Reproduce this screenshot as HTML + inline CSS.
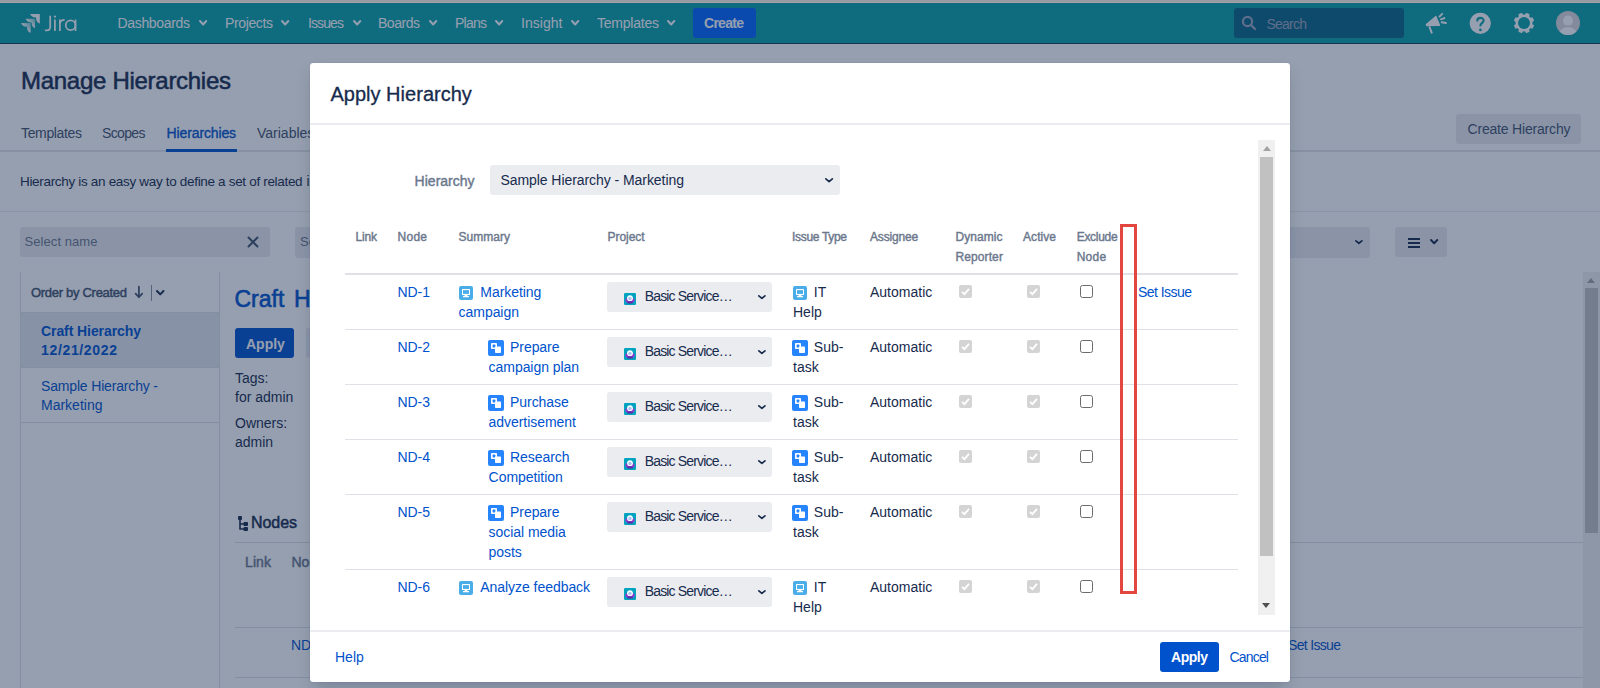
<!DOCTYPE html><html><head><meta charset="utf-8"><title>Apply Hierarchy</title><style>
html,body{margin:0;padding:0;}
body{width:1600px;height:688px;overflow:hidden;position:relative;background:#fff;font-family:"Liberation Sans",sans-serif;}
.t{position:absolute;white-space:nowrap;}
.r{position:absolute;}
#page{position:absolute;left:0;top:0;width:1600px;height:688px;overflow:hidden;}
#blanket{position:absolute;left:0;top:0;width:1600px;height:688px;background:rgba(23,43,77,0.45);z-index:2;}
#modal{position:absolute;left:310px;top:63px;width:980px;height:619px;background:#fff;border-radius:3px;overflow:hidden;z-index:3;box-shadow:0 0 1px rgba(9,30,66,0.31),0 8px 16px -4px rgba(9,30,66,0.25);}
</style></head><body><div id="page">
<div class="r" style="left:0px;top:0px;width:1600px;height:3px;background:#e8e4e8;"></div>
<div class="r" style="left:0px;top:3px;width:1600px;height:41px;background:#0aa0a6;"></div>
<div class="r" style="left:0px;top:43px;width:1600px;height:1px;background:#1b3a5a;"></div>
<svg class="r" style="left:16px;top:8px" width="30" height="30" viewBox="0 0 30 30">
<defs><linearGradient id="lg" x1="0" y1="1" x2="1" y2="0"><stop offset="0.45" stop-color="#fff"/><stop offset="1" stop-color="#fff" stop-opacity="0.4"/></linearGradient></defs>
<path d="M14.2 6.1 L23.8 6.1 L23.8 15.6 C21.5 14.8 20.1 13.5 20.1 9.6 C16.5 9.6 15.2 8.3 14.2 6.1 Z" fill="#fff"/>
<path d="M9.6 10.8 L19.1 10.8 L19.1 20.1 C16.9 19.3 15.6 18 15.6 14.5 C12 14.5 10.6 13.2 9.6 10.8 Z" fill="url(#lg)"/>
<path d="M5 15 L14.7 15 L14.7 24.8 C12.4 24 11.1 22.7 11.1 18.7 C7.5 18.7 6 17.4 5 15 Z" fill="url(#lg)"/>
</svg>
<svg class="r" style="left:40px;top:8px" width="40" height="26" viewBox="0 0 40 26" fill="none" stroke="#fff" stroke-width="1.75">
<path d="M10.2 7.8 L10.2 19 Q10.2 22.4 6.8 22.4 L4.9 22.4"/>
<circle cx="14.9" cy="8.7" r="1.1" fill="#fff" stroke="none"/>
<path d="M14.9 11.6 L14.9 23"/>
<path d="M19.9 11.6 L19.9 23 M19.9 15.8 Q20.3 11.9 24.6 11.9"/>
<circle cx="30.6" cy="17.3" r="4.85"/>
<path d="M35.5 11.6 L35.5 23"/>
</svg>
<div class="t " style="left:117.5px;top:13.15px;font-size:14px;line-height:20px;color:#fff;letter-spacing:-0.333px;">Dashboards</div>
<div class="t " style="left:225px;top:13.15px;font-size:14px;line-height:20px;color:#fff;letter-spacing:-0.368px;">Projects</div>
<div class="t " style="left:308px;top:13.15px;font-size:14px;line-height:20px;color:#fff;letter-spacing:-0.894px;">Issues</div>
<div class="t " style="left:378px;top:13.15px;font-size:14px;line-height:20px;color:#fff;letter-spacing:-0.472px;">Boards</div>
<div class="t " style="left:455px;top:13.15px;font-size:14px;line-height:20px;color:#fff;letter-spacing:-0.758px;">Plans</div>
<div class="t " style="left:521px;top:13.15px;font-size:14px;line-height:20px;color:#fff;letter-spacing:0.042px;">Insight</div>
<div class="t " style="left:597px;top:13.15px;font-size:14px;line-height:20px;color:#fff;letter-spacing:-0.227px;">Templates</div>
<svg class="r" style="left:198.75px;top:20.1px;overflow:visible" width="8.3" height="5.5" viewBox="0 0 8.3 5.5"><polyline points="1.0,1.0 4.15,4.5 7.300000000000001,1.0" fill="none" stroke="#fff" stroke-width="2" stroke-linecap="round" stroke-linejoin="round"/></svg>
<svg class="r" style="left:281.25px;top:20.1px;overflow:visible" width="8.3" height="5.5" viewBox="0 0 8.3 5.5"><polyline points="1.0,1.0 4.15,4.5 7.300000000000001,1.0" fill="none" stroke="#fff" stroke-width="2" stroke-linecap="round" stroke-linejoin="round"/></svg>
<svg class="r" style="left:352.5px;top:20.1px;overflow:visible" width="8.3" height="5.5" viewBox="0 0 8.3 5.5"><polyline points="1.0,1.0 4.15,4.5 7.300000000000001,1.0" fill="none" stroke="#fff" stroke-width="2" stroke-linecap="round" stroke-linejoin="round"/></svg>
<svg class="r" style="left:428.75px;top:20.1px;overflow:visible" width="8.3" height="5.5" viewBox="0 0 8.3 5.5"><polyline points="1.0,1.0 4.15,4.5 7.300000000000001,1.0" fill="none" stroke="#fff" stroke-width="2" stroke-linecap="round" stroke-linejoin="round"/></svg>
<svg class="r" style="left:495px;top:20.1px;overflow:visible" width="8.3" height="5.5" viewBox="0 0 8.3 5.5"><polyline points="1.0,1.0 4.15,4.5 7.300000000000001,1.0" fill="none" stroke="#fff" stroke-width="2" stroke-linecap="round" stroke-linejoin="round"/></svg>
<svg class="r" style="left:570.75px;top:20.1px;overflow:visible" width="8.3" height="5.5" viewBox="0 0 8.3 5.5"><polyline points="1.0,1.0 4.15,4.5 7.300000000000001,1.0" fill="none" stroke="#fff" stroke-width="2" stroke-linecap="round" stroke-linejoin="round"/></svg>
<svg class="r" style="left:666.75px;top:20.1px;overflow:visible" width="8.3" height="5.5" viewBox="0 0 8.3 5.5"><polyline points="1.0,1.0 4.15,4.5 7.300000000000001,1.0" fill="none" stroke="#fff" stroke-width="2" stroke-linecap="round" stroke-linejoin="round"/></svg>
<div class="r" style="left:693px;top:8px;width:63px;height:30px;background:#0065ff;border-radius:3px;"></div>
<div class="t " style="left:704px;top:13.15px;font-size:14px;line-height:20px;color:#fff;font-weight:bold;letter-spacing:-0.719px;">Create</div>
<div class="r" style="left:1234px;top:8px;width:170px;height:30px;background:#096483;border-radius:3px;"></div>
<svg class="r" style="left:1241px;top:15px" width="16" height="16" viewBox="0 0 16 16"><circle cx="6.5" cy="6.5" r="4.6" fill="none" stroke="#9aa5bd" stroke-width="2.2"/><line x1="10" y1="10" x2="14" y2="14" stroke="#9aa5bd" stroke-width="2.4" stroke-linecap="round"/></svg>
<div class="t " style="left:1266.5px;top:14.15px;font-size:14px;line-height:20px;color:#9aa5bd;letter-spacing:-0.772px;">Search</div>
<svg class="r" style="left:1420px;top:8px" width="32" height="30" viewBox="0 0 32 30">
<path d="M6.3 16.4 L15.9 8.4 L19.6 17.3 L6.6 17.6 Z" fill="#fff" stroke="#fff" stroke-width="1.2" stroke-linejoin="round"/>
<path d="M9.6 19.3 L11.7 24.6" stroke="#fff" stroke-width="2" stroke-linecap="round"/>
<path d="M19.4 8.6 L22.2 5.8 M20.9 11.3 L24.4 10.1 M21.7 14.3 L26 15" stroke="#fff" stroke-width="1.9" stroke-linecap="round"/>
</svg>
<svg class="r" style="left:1469px;top:12px" width="23" height="23" viewBox="0 0 23 23"><circle cx="11.3" cy="11.3" r="10.6" fill="#fff"/>
<path d="M8.3 8.6 C8.3 4.9 14.6 4.9 14.6 8.6 C14.6 10.9 11.4 11.2 11.4 13.4" fill="none" stroke="#0aa0a6" stroke-width="2.1" stroke-linecap="round"/><circle cx="11.4" cy="17.9" r="1.3" fill="#0aa0a6"/></svg>
<svg class="r" style="left:1513.2px;top:12px" width="22" height="22" viewBox="0 0 22 22"><rect x="8.9" y="0.8" width="4.2" height="3.6" rx="0.8" fill="#fff" transform="rotate(22.5 11 11)"/><rect x="8.9" y="0.8" width="4.2" height="3.6" rx="0.8" fill="#fff" transform="rotate(67.5 11 11)"/><rect x="8.9" y="0.8" width="4.2" height="3.6" rx="0.8" fill="#fff" transform="rotate(112.5 11 11)"/><rect x="8.9" y="0.8" width="4.2" height="3.6" rx="0.8" fill="#fff" transform="rotate(157.5 11 11)"/><rect x="8.9" y="0.8" width="4.2" height="3.6" rx="0.8" fill="#fff" transform="rotate(202.5 11 11)"/><rect x="8.9" y="0.8" width="4.2" height="3.6" rx="0.8" fill="#fff" transform="rotate(247.5 11 11)"/><rect x="8.9" y="0.8" width="4.2" height="3.6" rx="0.8" fill="#fff" transform="rotate(292.5 11 11)"/><rect x="8.9" y="0.8" width="4.2" height="3.6" rx="0.8" fill="#fff" transform="rotate(337.5 11 11)"/><circle cx="11" cy="11" r="8.5" fill="#fff"/><circle cx="11" cy="11" r="6" fill="#0aa0a6"/></svg>
<svg class="r" style="left:1556px;top:11px" width="24" height="24" viewBox="0 0 24 24"><defs><clipPath id="av"><circle cx="12" cy="12" r="12"/></clipPath></defs><circle cx="12" cy="12" r="12" fill="#dcd9da"/><g clip-path="url(#av)" fill="#fff"><circle cx="12" cy="9.6" r="5"/><ellipse cx="12" cy="24.5" rx="9.5" ry="8.5"/></g></svg>
<div class="t " style="left:21px;top:63.98px;font-size:24px;line-height:34px;color:#172b4d;letter-spacing:-0.281px;-webkit-text-stroke:0.55px #172b4d;">Manage Hierarchies</div>
<div class="t " style="left:21px;top:122.65px;font-size:14px;line-height:20px;color:#42526e;letter-spacing:-0.352px;">Templates</div>
<div class="t " style="left:102px;top:122.65px;font-size:14px;line-height:20px;color:#42526e;letter-spacing:-0.641px;">Scopes</div>
<div class="t " style="left:166.6px;top:122.65px;font-size:14px;line-height:20px;color:#0052cc;letter-spacing:-0.131px;-webkit-text-stroke:0.35px #0052cc;">Hierarchies</div>
<div class="t " style="left:257px;top:122.65px;font-size:14px;line-height:20px;color:#42526e;">Variables</div>
<div class="r" style="left:0px;top:150px;width:1600px;height:2px;background:#e4e6ea;"></div>
<div class="r" style="left:166px;top:149px;width:71px;height:3px;background:#0052cc;"></div>
<div class="r" style="left:1456px;top:114px;width:125px;height:30px;background:#ebecf0;border-radius:3px;"></div>
<div class="t " style="left:1467.5px;top:119.45px;font-size:14px;line-height:20px;color:#42526e;letter-spacing:-0.189px;">Create Hierarchy</div>
<div class="t " style="left:20px;top:171.82px;font-size:13.5px;line-height:19px;color:#172b4d;letter-spacing:-0.321px;">Hierarchy is an easy way to define a set of related</div>
<div class="t " style="left:306.5px;top:171.15px;font-size:14px;line-height:20px;color:#172b4d;">issues</div>
<div class="r" style="left:0px;top:211px;width:1600px;height:1px;background:#ebecf0;"></div>
<div class="r" style="left:20px;top:227px;width:250px;height:30px;background:#ebecf0;border-radius:3px;"></div>
<div class="t " style="left:24.5px;top:232.50px;font-size:13px;line-height:18px;color:#6b778c;letter-spacing:0.073px;">Select name</div>
<svg class="r" style="left:247px;top:236px" width="12" height="12" viewBox="0 0 12 12"><path d="M1.5 1.5 L10.5 10.5 M10.5 1.5 L1.5 10.5" stroke="#42526e" stroke-width="2" stroke-linecap="round"/></svg>
<div class="r" style="left:295px;top:227px;width:1075px;height:31px;background:#ebecf0;border-radius:3px;"></div>
<div class="t " style="left:300px;top:232.50px;font-size:13px;line-height:18px;color:#6b778c;">Select</div>
<svg class="r" style="left:1355px;top:239.7px;overflow:visible" width="7.8" height="4.2" viewBox="0 0 7.8 4.2"><polyline points="0.9,0.9 3.9,3.3000000000000003 6.8999999999999995,0.9" fill="none" stroke="#172b4d" stroke-width="1.8" stroke-linecap="round" stroke-linejoin="round"/></svg>
<div class="r" style="left:1395px;top:227px;width:52px;height:30px;background:#ebecf0;border-radius:3px;"></div>
<div class="r" style="left:1408px;top:238px;width:12px;height:2px;background:#172b4d;"></div>
<div class="r" style="left:1408px;top:242px;width:12px;height:2px;background:#172b4d;"></div>
<div class="r" style="left:1408px;top:246px;width:12px;height:2px;background:#172b4d;"></div>
<svg class="r" style="left:1430px;top:239.2px;overflow:visible" width="8.3" height="5.2" viewBox="0 0 8.3 5.2"><polyline points="1.0,1.0 4.15,4.2 7.300000000000001,1.0" fill="none" stroke="#172b4d" stroke-width="2" stroke-linecap="round" stroke-linejoin="round"/></svg>
<div class="r" style="left:20px;top:272px;width:1px;height:416px;background:#dfe1e6;"></div>
<div class="r" style="left:219px;top:272px;width:1px;height:416px;background:#dfe1e6;"></div>
<div class="t " style="left:31px;top:284.10px;font-size:13px;line-height:18px;color:#42526e;letter-spacing:-0.296px;-webkit-text-stroke:0.45px #42526e;">Order by Created</div>
<svg class="r" style="left:134px;top:285px" width="10" height="14" viewBox="0 0 10 14"><path d="M4.9 1.5 L4.9 12.2 M1.6 8.6 L4.9 12.3 L8.2 8.6" fill="none" stroke="#42526e" stroke-width="1.7" stroke-linecap="round" stroke-linejoin="round"/></svg>
<div class="r" style="left:151px;top:285px;width:1px;height:16px;background:#8993a4;"></div>
<svg class="r" style="left:155.8px;top:290.2px;overflow:visible" width="8.5" height="5.4" viewBox="0 0 8.5 5.4"><polyline points="1.0,1.0 4.25,4.4 7.5,1.0" fill="none" stroke="#172b4d" stroke-width="2" stroke-linecap="round" stroke-linejoin="round"/></svg>
<div class="r" style="left:21px;top:312px;width:198px;height:1px;background:#dfe1e6;"></div>
<div class="r" style="left:21px;top:313px;width:198px;height:54px;background:#e3e8f0;"></div>
<div class="t " style="left:41px;top:320.55px;font-size:14px;line-height:20px;color:#0052cc;font-weight:bold;letter-spacing:-0.083px;">Craft Hierarchy</div>
<div class="t " style="left:41px;top:340.15px;font-size:14px;line-height:20px;color:#0052cc;font-weight:bold;letter-spacing:0.658px;">12/21/2022</div>
<div class="r" style="left:21px;top:367px;width:198px;height:1px;background:#dfe1e6;"></div>
<div class="t " style="left:41px;top:375.85px;font-size:14px;line-height:20px;color:#0052cc;letter-spacing:-0.166px;">Sample Hierarchy -</div>
<div class="t " style="left:41px;top:395.15px;font-size:14px;line-height:20px;color:#0052cc;">Marketing</div>
<div class="r" style="left:21px;top:422px;width:198px;height:1px;background:#dfe1e6;"></div>
<div class="t " style="left:234.5px;top:283.03px;font-size:23px;line-height:32px;color:#0052cc;-webkit-text-stroke:0.6px #0052cc;word-spacing:3.2px;">Craft Hierarchy 12/21/2022</div>
<div class="r" style="left:235px;top:328px;width:59px;height:30px;background:#0052cc;border-radius:3px;"></div>
<div class="r" style="left:306px;top:328px;width:60px;height:30px;background:#ebecf0;border-radius:3px;"></div>
<div class="t " style="left:246px;top:334.15px;font-size:14px;line-height:20px;color:#fff;font-weight:bold;">Apply</div>
<div class="t " style="left:235px;top:367.55px;font-size:14px;line-height:20px;color:#172b4d;">Tags:</div>
<div class="t " style="left:235px;top:387.15px;font-size:14px;line-height:20px;color:#172b4d;">for admin</div>
<div class="t " style="left:235px;top:413.15px;font-size:14px;line-height:20px;color:#172b4d;">Owners:</div>
<div class="t " style="left:235px;top:432.15px;font-size:14px;line-height:20px;color:#172b4d;">admin</div>
<svg class="r" style="left:237px;top:515px" width="12" height="17" viewBox="0 0 12 17"><rect x="1" y="1" width="4" height="4" rx="1" fill="#172b4d"/><path d="M3 4 L3 14 L7 14 M3 9 L7 9" stroke="#172b4d" stroke-width="1.6" fill="none"/><rect x="6.5" y="7" width="4.5" height="4" rx="1" fill="#172b4d"/><rect x="6.5" y="12" width="4.5" height="4" rx="1" fill="#172b4d"/></svg>
<div class="t " style="left:251px;top:512.46px;font-size:16px;line-height:22px;color:#172b4d;letter-spacing:-0.062px;-webkit-text-stroke:0.5px #172b4d;">Nodes</div>
<div class="r" style="left:235px;top:542px;width:1348px;height:1px;background:#dfe1e6;"></div>
<div class="t " style="left:245px;top:552.15px;font-size:14px;line-height:20px;color:#6b778c;letter-spacing:0.104px;-webkit-text-stroke:0.45px #6b778c;">Link</div>
<div class="t " style="left:291.5px;top:552.15px;font-size:14px;line-height:20px;color:#6b778c;-webkit-text-stroke:0.45px #6b778c;">Node</div>
<div class="r" style="left:235px;top:627px;width:1348px;height:1px;background:#dfe1e6;"></div>
<div class="t " style="left:291px;top:635.15px;font-size:14px;line-height:20px;color:#0052cc;">ND-1</div>
<div class="t " style="left:1288px;top:635.15px;font-size:14px;line-height:20px;color:#0052cc;letter-spacing:-0.672px;">Set Issue</div>
<div class="r" style="left:235px;top:677px;width:1348px;height:1px;background:#dfe1e6;"></div>
<div class="r" style="left:1583px;top:272px;width:17px;height:416px;background:#f0f0f0;"></div>
<div class="r" style="left:1585px;top:288px;width:13px;height:245px;background:#c1c1c1;"></div>
<div class="r" style="left:1587px;top:278px;width:0;height:0;border-left:4.5px solid transparent;border-right:4.5px solid transparent;border-bottom:5px solid #a3a3a3"></div>
</div>
<div id="blanket"></div>
<div class="r" style="left:0;top:0;width:1600px;height:2px;background:#979ba4;z-index:5"></div>
<div class="r" style="left:0;top:2px;width:1600px;height:1px;background:#a3a2a6;z-index:5"></div>
<div id="modal">
<div style="position:absolute;left:-310px;top:-63px;width:1600px;height:688px">
<div class="t " style="left:330.4px;top:80.32px;font-size:20px;line-height:28px;color:#172b4d;letter-spacing:0.023px;-webkit-text-stroke:0.3px #172b4d;">Apply Hierarchy</div>
<div class="r" style="left:310px;top:123px;width:980px;height:2px;background:#ebecf0;"></div>
<div style="position:absolute;left:310px;top:125px;width:980px;height:495px;overflow:hidden"><div style="position:absolute;left:-310px;top:-125px;width:1600px;height:688px">
<div class="t " style="left:414.6px;top:170.55px;font-size:14px;line-height:20px;color:#6b778c;letter-spacing:0.012px;-webkit-text-stroke:0.4px #6b778c;">Hierarchy</div>
<div class="r" style="left:490px;top:165px;width:350px;height:30px;background:#ebecf0;border-radius:3px;"></div>
<div class="t " style="left:500.4px;top:169.65px;font-size:14px;line-height:20px;color:#172b4d;letter-spacing:-0.058px;">Sample Hierarchy - Marketing</div>
<svg class="r" style="left:824.9px;top:177.6px;overflow:visible" width="8.2" height="4.5" viewBox="0 0 8.2 4.5"><polyline points="0.85,0.85 4.1,3.65 7.35,0.85" fill="none" stroke="#172b4d" stroke-width="1.7" stroke-linecap="round" stroke-linejoin="round"/></svg>
<div class="t " style="left:355.4px;top:228.94px;font-size:12px;line-height:17px;color:#6b778c;letter-spacing:-0.139px;-webkit-text-stroke:0.4px #6b778c;">Link</div>
<div class="t " style="left:397.6px;top:228.94px;font-size:12px;line-height:17px;color:#6b778c;letter-spacing:0.237px;-webkit-text-stroke:0.4px #6b778c;">Node</div>
<div class="t " style="left:458.5px;top:228.94px;font-size:12px;line-height:17px;color:#6b778c;letter-spacing:0.026px;-webkit-text-stroke:0.4px #6b778c;">Summary</div>
<div class="t " style="left:607.6px;top:228.94px;font-size:12px;line-height:17px;color:#6b778c;letter-spacing:-0.06px;-webkit-text-stroke:0.4px #6b778c;">Project</div>
<div class="t " style="left:792px;top:228.94px;font-size:12px;line-height:17px;color:#6b778c;letter-spacing:-0.314px;-webkit-text-stroke:0.4px #6b778c;">Issue Type</div>
<div class="t " style="left:870px;top:228.94px;font-size:12px;line-height:17px;color:#6b778c;letter-spacing:-0.154px;-webkit-text-stroke:0.4px #6b778c;">Assignee</div>
<div class="t " style="left:955.4px;top:228.94px;font-size:12px;line-height:17px;color:#6b778c;letter-spacing:0.085px;-webkit-text-stroke:0.4px #6b778c;">Dynamic</div>
<div class="t " style="left:1023px;top:228.94px;font-size:12px;line-height:17px;color:#6b778c;letter-spacing:0.062px;-webkit-text-stroke:0.4px #6b778c;">Active</div>
<div class="t " style="left:1076.7px;top:228.94px;font-size:12px;line-height:17px;color:#6b778c;letter-spacing:-0.284px;-webkit-text-stroke:0.4px #6b778c;">Exclude</div>
<div class="t " style="left:955.4px;top:249.34px;font-size:12px;line-height:17px;color:#6b778c;letter-spacing:0.116px;-webkit-text-stroke:0.4px #6b778c;">Reporter</div>
<div class="t " style="left:1076.7px;top:249.34px;font-size:12px;line-height:17px;color:#6b778c;letter-spacing:0.237px;-webkit-text-stroke:0.4px #6b778c;">Node</div>
<div class="r" style="left:345px;top:273px;width:893px;height:2px;background:#dfe1e6;"></div>
<div class="t " style="left:397.6px;top:282.15px;font-size:14px;line-height:20px;color:#0052cc;letter-spacing:-0.1px;">ND-1</div>
<svg class="r" style="left:459px;top:286px" width="14" height="14" viewBox="0 0 14 14"><rect width="14" height="14" rx="2" fill="#4bade8"/><rect x="3" y="3" width="8" height="6" rx="0.6" fill="#fff"/><rect x="4" y="4.1" width="6" height="3.8" fill="#4bade8"/><rect x="5.6" y="8.8" width="2.8" height="1.4" fill="#fff"/><rect x="4" y="10" width="6" height="1.3" rx="0.3" fill="#fff"/></svg>
<div class="t " style="left:480.3px;top:282.15px;font-size:14px;line-height:20px;color:#0052cc;letter-spacing:-0.05px;">Marketing</div>
<div class="t " style="left:458.6px;top:302.15px;font-size:14px;line-height:20px;color:#0052cc;letter-spacing:-0.05px;">campaign</div>
<div class="r" style="left:607px;top:282px;width:165px;height:30px;background:#ebecf0;border-radius:3px;"></div>
<svg class="r" style="left:624px;top:293px" width="12" height="12" viewBox="0 0 12 12"><rect width="12" height="12" rx="1.2" fill="#00a3bf"/><ellipse cx="6" cy="7.2" rx="4.6" ry="2.6" fill="#8b3fd0"/><rect x="3.2" y="8.6" width="5.6" height="1.8" rx="0.6" fill="#5e2aa6"/><circle cx="6" cy="5.2" r="2.9" fill="#fff"/><circle cx="6" cy="5.5" r="1.7" fill="#a9c4f2"/></svg>
<div class="t " style="left:644.7px;top:286.15px;font-size:14px;line-height:20px;color:#172b4d;letter-spacing:-0.832px;">Basic Service…</div>
<svg class="r" style="left:757.5px;top:294.7px;overflow:visible" width="7.8" height="4.2" viewBox="0 0 7.8 4.2"><polyline points="0.85,0.85 3.9,3.35 6.95,0.85" fill="none" stroke="#172b4d" stroke-width="1.7" stroke-linecap="round" stroke-linejoin="round"/></svg>
<svg class="r" style="left:793px;top:286px" width="14" height="14" viewBox="0 0 14 14"><rect width="14" height="14" rx="2" fill="#4bade8"/><rect x="3" y="3" width="8" height="6" rx="0.6" fill="#fff"/><rect x="4" y="4.1" width="6" height="3.8" fill="#4bade8"/><rect x="5.6" y="8.8" width="2.8" height="1.4" fill="#fff"/><rect x="4" y="10" width="6" height="1.3" rx="0.3" fill="#fff"/></svg>
<div class="t " style="left:813.8px;top:282.15px;font-size:14px;line-height:20px;color:#172b4d;">IT</div>
<div class="t " style="left:793px;top:302.15px;font-size:14px;line-height:20px;color:#172b4d;">Help</div>
<div class="t " style="left:870px;top:282.15px;font-size:14px;line-height:20px;color:#172b4d;">Automatic</div>
<svg class="r" style="left:959px;top:285px" width="13" height="13" viewBox="0 0 13 13"><rect width="13" height="13" rx="2" fill="#d4d4d4"/><path d="M3 6.8 L5.4 9.2 L10 3.8" fill="none" stroke="#fff" stroke-width="1.8"/></svg>
<svg class="r" style="left:1027px;top:285px" width="13" height="13" viewBox="0 0 13 13"><rect width="13" height="13" rx="2" fill="#d4d4d4"/><path d="M3 6.8 L5.4 9.2 L10 3.8" fill="none" stroke="#fff" stroke-width="1.8"/></svg>
<svg class="r" style="left:1080px;top:285px" width="13" height="13" viewBox="0 0 13 13"><rect x="0.5" y="0.5" width="12" height="12" rx="2" fill="#fff" stroke="#6b6b6b" stroke-width="1"/></svg>
<div class="t " style="left:1138px;top:282.15px;font-size:14px;line-height:20px;color:#0052cc;letter-spacing:-0.547px;">Set Issue</div>
<div class="t " style="left:397.6px;top:337.15px;font-size:14px;line-height:20px;color:#0052cc;letter-spacing:-0.1px;">ND-2</div>
<svg class="r" style="left:488px;top:340px" width="16" height="16" viewBox="0 0 16 16"><rect width="16" height="16" rx="2" fill="#2684ff"/><rect x="3" y="3" width="6" height="6" rx="0.8" fill="#fff"/><rect x="4.6" y="4.6" width="2.8" height="2.8" rx="0.6" fill="#2684ff"/><rect x="7" y="6.6" width="6" height="6.5" rx="0.8" fill="#fff"/></svg>
<div class="t " style="left:510px;top:337.15px;font-size:14px;line-height:20px;color:#0052cc;letter-spacing:-0.05px;">Prepare</div>
<div class="t " style="left:488.6px;top:357.15px;font-size:14px;line-height:20px;color:#0052cc;letter-spacing:-0.05px;">campaign plan</div>
<div class="r" style="left:607px;top:337px;width:165px;height:30px;background:#ebecf0;border-radius:3px;"></div>
<svg class="r" style="left:624px;top:348px" width="12" height="12" viewBox="0 0 12 12"><rect width="12" height="12" rx="1.2" fill="#00a3bf"/><ellipse cx="6" cy="7.2" rx="4.6" ry="2.6" fill="#8b3fd0"/><rect x="3.2" y="8.6" width="5.6" height="1.8" rx="0.6" fill="#5e2aa6"/><circle cx="6" cy="5.2" r="2.9" fill="#fff"/><circle cx="6" cy="5.5" r="1.7" fill="#a9c4f2"/></svg>
<div class="t " style="left:644.7px;top:341.15px;font-size:14px;line-height:20px;color:#172b4d;letter-spacing:-0.832px;">Basic Service…</div>
<svg class="r" style="left:757.5px;top:349.7px;overflow:visible" width="7.8" height="4.2" viewBox="0 0 7.8 4.2"><polyline points="0.85,0.85 3.9,3.35 6.95,0.85" fill="none" stroke="#172b4d" stroke-width="1.7" stroke-linecap="round" stroke-linejoin="round"/></svg>
<svg class="r" style="left:792px;top:340px" width="16" height="16" viewBox="0 0 16 16"><rect width="16" height="16" rx="2" fill="#2684ff"/><rect x="3" y="3" width="6" height="6" rx="0.8" fill="#fff"/><rect x="4.6" y="4.6" width="2.8" height="2.8" rx="0.6" fill="#2684ff"/><rect x="7" y="6.6" width="6" height="6.5" rx="0.8" fill="#fff"/></svg>
<div class="t " style="left:813.8px;top:337.15px;font-size:14px;line-height:20px;color:#172b4d;">Sub-</div>
<div class="t " style="left:793px;top:357.15px;font-size:14px;line-height:20px;color:#172b4d;">task</div>
<div class="t " style="left:870px;top:337.15px;font-size:14px;line-height:20px;color:#172b4d;">Automatic</div>
<svg class="r" style="left:959px;top:340px" width="13" height="13" viewBox="0 0 13 13"><rect width="13" height="13" rx="2" fill="#d4d4d4"/><path d="M3 6.8 L5.4 9.2 L10 3.8" fill="none" stroke="#fff" stroke-width="1.8"/></svg>
<svg class="r" style="left:1027px;top:340px" width="13" height="13" viewBox="0 0 13 13"><rect width="13" height="13" rx="2" fill="#d4d4d4"/><path d="M3 6.8 L5.4 9.2 L10 3.8" fill="none" stroke="#fff" stroke-width="1.8"/></svg>
<svg class="r" style="left:1080px;top:340px" width="13" height="13" viewBox="0 0 13 13"><rect x="0.5" y="0.5" width="12" height="12" rx="2" fill="#fff" stroke="#6b6b6b" stroke-width="1"/></svg>
<div class="t " style="left:397.6px;top:392.15px;font-size:14px;line-height:20px;color:#0052cc;letter-spacing:-0.1px;">ND-3</div>
<svg class="r" style="left:488px;top:395px" width="16" height="16" viewBox="0 0 16 16"><rect width="16" height="16" rx="2" fill="#2684ff"/><rect x="3" y="3" width="6" height="6" rx="0.8" fill="#fff"/><rect x="4.6" y="4.6" width="2.8" height="2.8" rx="0.6" fill="#2684ff"/><rect x="7" y="6.6" width="6" height="6.5" rx="0.8" fill="#fff"/></svg>
<div class="t " style="left:510px;top:392.15px;font-size:14px;line-height:20px;color:#0052cc;letter-spacing:-0.05px;">Purchase</div>
<div class="t " style="left:488.6px;top:412.15px;font-size:14px;line-height:20px;color:#0052cc;letter-spacing:-0.05px;">advertisement</div>
<div class="r" style="left:607px;top:392px;width:165px;height:30px;background:#ebecf0;border-radius:3px;"></div>
<svg class="r" style="left:624px;top:403px" width="12" height="12" viewBox="0 0 12 12"><rect width="12" height="12" rx="1.2" fill="#00a3bf"/><ellipse cx="6" cy="7.2" rx="4.6" ry="2.6" fill="#8b3fd0"/><rect x="3.2" y="8.6" width="5.6" height="1.8" rx="0.6" fill="#5e2aa6"/><circle cx="6" cy="5.2" r="2.9" fill="#fff"/><circle cx="6" cy="5.5" r="1.7" fill="#a9c4f2"/></svg>
<div class="t " style="left:644.7px;top:396.15px;font-size:14px;line-height:20px;color:#172b4d;letter-spacing:-0.832px;">Basic Service…</div>
<svg class="r" style="left:757.5px;top:404.7px;overflow:visible" width="7.8" height="4.2" viewBox="0 0 7.8 4.2"><polyline points="0.85,0.85 3.9,3.35 6.95,0.85" fill="none" stroke="#172b4d" stroke-width="1.7" stroke-linecap="round" stroke-linejoin="round"/></svg>
<svg class="r" style="left:792px;top:395px" width="16" height="16" viewBox="0 0 16 16"><rect width="16" height="16" rx="2" fill="#2684ff"/><rect x="3" y="3" width="6" height="6" rx="0.8" fill="#fff"/><rect x="4.6" y="4.6" width="2.8" height="2.8" rx="0.6" fill="#2684ff"/><rect x="7" y="6.6" width="6" height="6.5" rx="0.8" fill="#fff"/></svg>
<div class="t " style="left:813.8px;top:392.15px;font-size:14px;line-height:20px;color:#172b4d;">Sub-</div>
<div class="t " style="left:793px;top:412.15px;font-size:14px;line-height:20px;color:#172b4d;">task</div>
<div class="t " style="left:870px;top:392.15px;font-size:14px;line-height:20px;color:#172b4d;">Automatic</div>
<svg class="r" style="left:959px;top:395px" width="13" height="13" viewBox="0 0 13 13"><rect width="13" height="13" rx="2" fill="#d4d4d4"/><path d="M3 6.8 L5.4 9.2 L10 3.8" fill="none" stroke="#fff" stroke-width="1.8"/></svg>
<svg class="r" style="left:1027px;top:395px" width="13" height="13" viewBox="0 0 13 13"><rect width="13" height="13" rx="2" fill="#d4d4d4"/><path d="M3 6.8 L5.4 9.2 L10 3.8" fill="none" stroke="#fff" stroke-width="1.8"/></svg>
<svg class="r" style="left:1080px;top:395px" width="13" height="13" viewBox="0 0 13 13"><rect x="0.5" y="0.5" width="12" height="12" rx="2" fill="#fff" stroke="#6b6b6b" stroke-width="1"/></svg>
<div class="t " style="left:397.6px;top:447.15px;font-size:14px;line-height:20px;color:#0052cc;letter-spacing:-0.1px;">ND-4</div>
<svg class="r" style="left:488px;top:450px" width="16" height="16" viewBox="0 0 16 16"><rect width="16" height="16" rx="2" fill="#2684ff"/><rect x="3" y="3" width="6" height="6" rx="0.8" fill="#fff"/><rect x="4.6" y="4.6" width="2.8" height="2.8" rx="0.6" fill="#2684ff"/><rect x="7" y="6.6" width="6" height="6.5" rx="0.8" fill="#fff"/></svg>
<div class="t " style="left:510px;top:447.15px;font-size:14px;line-height:20px;color:#0052cc;letter-spacing:-0.05px;">Research</div>
<div class="t " style="left:488.6px;top:467.15px;font-size:14px;line-height:20px;color:#0052cc;letter-spacing:-0.05px;">Competition</div>
<div class="r" style="left:607px;top:447px;width:165px;height:30px;background:#ebecf0;border-radius:3px;"></div>
<svg class="r" style="left:624px;top:458px" width="12" height="12" viewBox="0 0 12 12"><rect width="12" height="12" rx="1.2" fill="#00a3bf"/><ellipse cx="6" cy="7.2" rx="4.6" ry="2.6" fill="#8b3fd0"/><rect x="3.2" y="8.6" width="5.6" height="1.8" rx="0.6" fill="#5e2aa6"/><circle cx="6" cy="5.2" r="2.9" fill="#fff"/><circle cx="6" cy="5.5" r="1.7" fill="#a9c4f2"/></svg>
<div class="t " style="left:644.7px;top:451.15px;font-size:14px;line-height:20px;color:#172b4d;letter-spacing:-0.832px;">Basic Service…</div>
<svg class="r" style="left:757.5px;top:459.7px;overflow:visible" width="7.8" height="4.2" viewBox="0 0 7.8 4.2"><polyline points="0.85,0.85 3.9,3.35 6.95,0.85" fill="none" stroke="#172b4d" stroke-width="1.7" stroke-linecap="round" stroke-linejoin="round"/></svg>
<svg class="r" style="left:792px;top:450px" width="16" height="16" viewBox="0 0 16 16"><rect width="16" height="16" rx="2" fill="#2684ff"/><rect x="3" y="3" width="6" height="6" rx="0.8" fill="#fff"/><rect x="4.6" y="4.6" width="2.8" height="2.8" rx="0.6" fill="#2684ff"/><rect x="7" y="6.6" width="6" height="6.5" rx="0.8" fill="#fff"/></svg>
<div class="t " style="left:813.8px;top:447.15px;font-size:14px;line-height:20px;color:#172b4d;">Sub-</div>
<div class="t " style="left:793px;top:467.15px;font-size:14px;line-height:20px;color:#172b4d;">task</div>
<div class="t " style="left:870px;top:447.15px;font-size:14px;line-height:20px;color:#172b4d;">Automatic</div>
<svg class="r" style="left:959px;top:450px" width="13" height="13" viewBox="0 0 13 13"><rect width="13" height="13" rx="2" fill="#d4d4d4"/><path d="M3 6.8 L5.4 9.2 L10 3.8" fill="none" stroke="#fff" stroke-width="1.8"/></svg>
<svg class="r" style="left:1027px;top:450px" width="13" height="13" viewBox="0 0 13 13"><rect width="13" height="13" rx="2" fill="#d4d4d4"/><path d="M3 6.8 L5.4 9.2 L10 3.8" fill="none" stroke="#fff" stroke-width="1.8"/></svg>
<svg class="r" style="left:1080px;top:450px" width="13" height="13" viewBox="0 0 13 13"><rect x="0.5" y="0.5" width="12" height="12" rx="2" fill="#fff" stroke="#6b6b6b" stroke-width="1"/></svg>
<div class="t " style="left:397.6px;top:502.15px;font-size:14px;line-height:20px;color:#0052cc;letter-spacing:-0.1px;">ND-5</div>
<svg class="r" style="left:488px;top:505px" width="16" height="16" viewBox="0 0 16 16"><rect width="16" height="16" rx="2" fill="#2684ff"/><rect x="3" y="3" width="6" height="6" rx="0.8" fill="#fff"/><rect x="4.6" y="4.6" width="2.8" height="2.8" rx="0.6" fill="#2684ff"/><rect x="7" y="6.6" width="6" height="6.5" rx="0.8" fill="#fff"/></svg>
<div class="t " style="left:510px;top:502.15px;font-size:14px;line-height:20px;color:#0052cc;letter-spacing:-0.05px;">Prepare</div>
<div class="t " style="left:488.6px;top:522.15px;font-size:14px;line-height:20px;color:#0052cc;letter-spacing:-0.05px;">social media</div>
<div class="t " style="left:488.6px;top:542.15px;font-size:14px;line-height:20px;color:#0052cc;letter-spacing:-0.05px;">posts</div>
<div class="r" style="left:607px;top:502px;width:165px;height:30px;background:#ebecf0;border-radius:3px;"></div>
<svg class="r" style="left:624px;top:513px" width="12" height="12" viewBox="0 0 12 12"><rect width="12" height="12" rx="1.2" fill="#00a3bf"/><ellipse cx="6" cy="7.2" rx="4.6" ry="2.6" fill="#8b3fd0"/><rect x="3.2" y="8.6" width="5.6" height="1.8" rx="0.6" fill="#5e2aa6"/><circle cx="6" cy="5.2" r="2.9" fill="#fff"/><circle cx="6" cy="5.5" r="1.7" fill="#a9c4f2"/></svg>
<div class="t " style="left:644.7px;top:506.15px;font-size:14px;line-height:20px;color:#172b4d;letter-spacing:-0.832px;">Basic Service…</div>
<svg class="r" style="left:757.5px;top:514.7px;overflow:visible" width="7.8" height="4.2" viewBox="0 0 7.8 4.2"><polyline points="0.85,0.85 3.9,3.35 6.95,0.85" fill="none" stroke="#172b4d" stroke-width="1.7" stroke-linecap="round" stroke-linejoin="round"/></svg>
<svg class="r" style="left:792px;top:505px" width="16" height="16" viewBox="0 0 16 16"><rect width="16" height="16" rx="2" fill="#2684ff"/><rect x="3" y="3" width="6" height="6" rx="0.8" fill="#fff"/><rect x="4.6" y="4.6" width="2.8" height="2.8" rx="0.6" fill="#2684ff"/><rect x="7" y="6.6" width="6" height="6.5" rx="0.8" fill="#fff"/></svg>
<div class="t " style="left:813.8px;top:502.15px;font-size:14px;line-height:20px;color:#172b4d;">Sub-</div>
<div class="t " style="left:793px;top:522.15px;font-size:14px;line-height:20px;color:#172b4d;">task</div>
<div class="t " style="left:870px;top:502.15px;font-size:14px;line-height:20px;color:#172b4d;">Automatic</div>
<svg class="r" style="left:959px;top:505px" width="13" height="13" viewBox="0 0 13 13"><rect width="13" height="13" rx="2" fill="#d4d4d4"/><path d="M3 6.8 L5.4 9.2 L10 3.8" fill="none" stroke="#fff" stroke-width="1.8"/></svg>
<svg class="r" style="left:1027px;top:505px" width="13" height="13" viewBox="0 0 13 13"><rect width="13" height="13" rx="2" fill="#d4d4d4"/><path d="M3 6.8 L5.4 9.2 L10 3.8" fill="none" stroke="#fff" stroke-width="1.8"/></svg>
<svg class="r" style="left:1080px;top:505px" width="13" height="13" viewBox="0 0 13 13"><rect x="0.5" y="0.5" width="12" height="12" rx="2" fill="#fff" stroke="#6b6b6b" stroke-width="1"/></svg>
<div class="t " style="left:397.6px;top:577.15px;font-size:14px;line-height:20px;color:#0052cc;letter-spacing:-0.1px;">ND-6</div>
<svg class="r" style="left:459px;top:581px" width="14" height="14" viewBox="0 0 14 14"><rect width="14" height="14" rx="2" fill="#4bade8"/><rect x="3" y="3" width="8" height="6" rx="0.6" fill="#fff"/><rect x="4" y="4.1" width="6" height="3.8" fill="#4bade8"/><rect x="5.6" y="8.8" width="2.8" height="1.4" fill="#fff"/><rect x="4" y="10" width="6" height="1.3" rx="0.3" fill="#fff"/></svg>
<div class="t " style="left:480.3px;top:577.15px;font-size:14px;line-height:20px;color:#0052cc;letter-spacing:-0.05px;">Analyze feedback</div>
<div class="r" style="left:607px;top:577px;width:165px;height:30px;background:#ebecf0;border-radius:3px;"></div>
<svg class="r" style="left:624px;top:588px" width="12" height="12" viewBox="0 0 12 12"><rect width="12" height="12" rx="1.2" fill="#00a3bf"/><ellipse cx="6" cy="7.2" rx="4.6" ry="2.6" fill="#8b3fd0"/><rect x="3.2" y="8.6" width="5.6" height="1.8" rx="0.6" fill="#5e2aa6"/><circle cx="6" cy="5.2" r="2.9" fill="#fff"/><circle cx="6" cy="5.5" r="1.7" fill="#a9c4f2"/></svg>
<div class="t " style="left:644.7px;top:581.15px;font-size:14px;line-height:20px;color:#172b4d;letter-spacing:-0.832px;">Basic Service…</div>
<svg class="r" style="left:757.5px;top:589.7px;overflow:visible" width="7.8" height="4.2" viewBox="0 0 7.8 4.2"><polyline points="0.85,0.85 3.9,3.35 6.95,0.85" fill="none" stroke="#172b4d" stroke-width="1.7" stroke-linecap="round" stroke-linejoin="round"/></svg>
<svg class="r" style="left:793px;top:581px" width="14" height="14" viewBox="0 0 14 14"><rect width="14" height="14" rx="2" fill="#4bade8"/><rect x="3" y="3" width="8" height="6" rx="0.6" fill="#fff"/><rect x="4" y="4.1" width="6" height="3.8" fill="#4bade8"/><rect x="5.6" y="8.8" width="2.8" height="1.4" fill="#fff"/><rect x="4" y="10" width="6" height="1.3" rx="0.3" fill="#fff"/></svg>
<div class="t " style="left:813.8px;top:577.15px;font-size:14px;line-height:20px;color:#172b4d;">IT</div>
<div class="t " style="left:793px;top:597.15px;font-size:14px;line-height:20px;color:#172b4d;">Help</div>
<div class="t " style="left:870px;top:577.15px;font-size:14px;line-height:20px;color:#172b4d;">Automatic</div>
<svg class="r" style="left:959px;top:580px" width="13" height="13" viewBox="0 0 13 13"><rect width="13" height="13" rx="2" fill="#d4d4d4"/><path d="M3 6.8 L5.4 9.2 L10 3.8" fill="none" stroke="#fff" stroke-width="1.8"/></svg>
<svg class="r" style="left:1027px;top:580px" width="13" height="13" viewBox="0 0 13 13"><rect width="13" height="13" rx="2" fill="#d4d4d4"/><path d="M3 6.8 L5.4 9.2 L10 3.8" fill="none" stroke="#fff" stroke-width="1.8"/></svg>
<svg class="r" style="left:1080px;top:580px" width="13" height="13" viewBox="0 0 13 13"><rect x="0.5" y="0.5" width="12" height="12" rx="2" fill="#fff" stroke="#6b6b6b" stroke-width="1"/></svg>
<div class="r" style="left:345px;top:329px;width:893px;height:1px;background:#dfe1e6;"></div>
<div class="r" style="left:345px;top:384px;width:893px;height:1px;background:#dfe1e6;"></div>
<div class="r" style="left:345px;top:439px;width:893px;height:1px;background:#dfe1e6;"></div>
<div class="r" style="left:345px;top:494px;width:893px;height:1px;background:#dfe1e6;"></div>
<div class="r" style="left:345px;top:569px;width:893px;height:1px;background:#dfe1e6;"></div>
<div class="r" style="left:345px;top:624px;width:893px;height:1px;background:#dfe1e6;"></div>
<div class="r" style="left:1120px;top:224px;width:11px;height:364px;border:3px solid #e2463f"></div>
<div class="r" style="left:1258px;top:140px;width:17px;height:475px;background:#f0f0f0;"></div>
<div class="r" style="left:1260px;top:157px;width:13px;height:399px;background:#c1c1c1;"></div>
<div class="r" style="left:1262.5px;top:146px;width:0;height:0;border-left:4.5px solid transparent;border-right:4.5px solid transparent;border-bottom:5px solid #a3a3a3"></div>
<div class="r" style="left:1262px;top:603px;width:0;height:0;border-left:4.5px solid transparent;border-right:4.5px solid transparent;border-top:5px solid #505050"></div>
</div></div>
<div class="r" style="left:310px;top:630px;width:980px;height:2px;background:#ebecf0;"></div>
<div class="t " style="left:335px;top:647.15px;font-size:14px;line-height:20px;color:#0052cc;">Help</div>
<div class="r" style="left:1160px;top:642px;width:59px;height:30px;background:#0052cc;border-radius:3px;"></div>
<div class="t " style="left:1171px;top:647.35px;font-size:14px;line-height:20px;color:#fff;font-weight:bold;letter-spacing:-0.473px;">Apply</div>
<div class="t " style="left:1229.4px;top:647.15px;font-size:14px;line-height:20px;color:#0052cc;letter-spacing:-0.799px;">Cancel</div>
</div>
</div></body></html>
